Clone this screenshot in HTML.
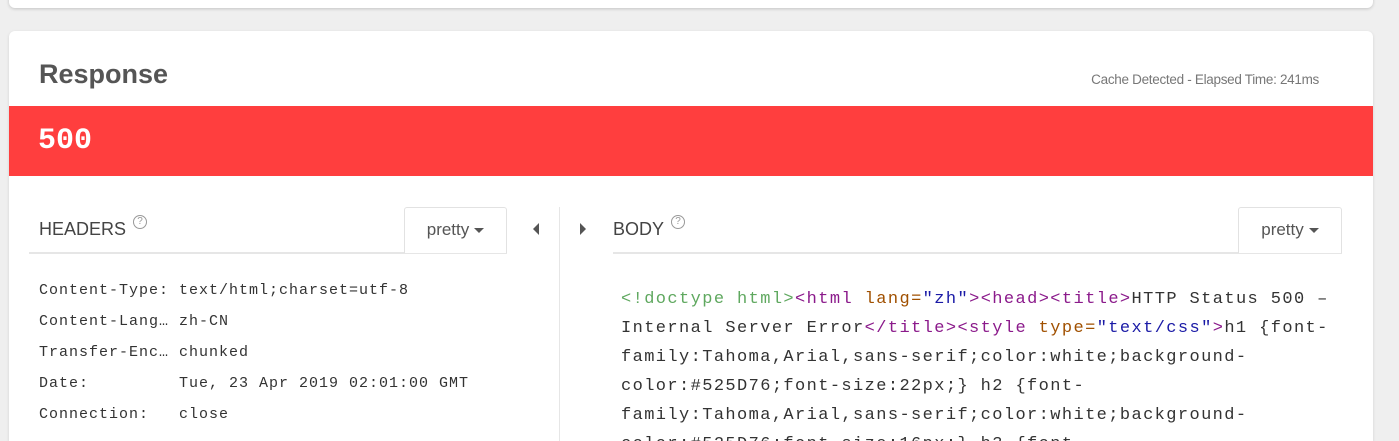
<!DOCTYPE html>
<html style="height:441px;overflow:hidden"><head><style>
body{margin:0;width:1399px;height:441px;background:#efefef;overflow:hidden;font-family:"Liberation Sans",sans-serif;position:relative}
.top{position:absolute;left:9px;top:-10px;width:1364px;height:18px;background:#fff;border-radius:6px;box-shadow:0 1px 3px rgba(0,0,0,.18)}
.card{position:absolute;left:9px;top:31px;width:1364px;height:410px;background:#fff;border-radius:6px 6px 0 0;box-shadow:0 1px 3px rgba(0,0,0,.12);overflow:hidden}
.abs{position:absolute}
.title{left:30px;top:28px;font-size:27px;font-weight:bold;color:#555}
.cache{right:54px;top:41px;font-size:13.5px;color:#777;letter-spacing:-0.3px}
.red{left:0;top:75px;width:1364px;height:70px;background:#ff3e3e}
.code{left:29px;top:93px;font-family:"Liberation Mono",monospace;font-weight:bold;color:#fff;font-size:30px}
.lab{font-size:18px;color:#444}
.q{display:inline-block;width:12px;height:12px;border:1px solid #999;border-radius:50%;font-size:10px;color:#999;text-align:center;line-height:12px;vertical-align:top;margin-left:7px;margin-top:-4px}
.line{height:2px;background:#e6e6e6}
.btn{border:1px solid #e2e2e2;border-bottom:none;border-radius:3px 3px 0 0;background:#fff;font-size:17px;color:#555;text-align:center;line-height:44px}
.car{display:inline-block;border-left:5px solid transparent;border-right:5px solid transparent;border-top:5px solid #555;vertical-align:middle;margin-left:5px}
.hd{font-family:"Liberation Mono",monospace;font-size:15px;color:#333;line-height:31px;white-space:pre;letter-spacing:1px}
.bd{font-family:"Liberation Mono",monospace;font-size:17px;color:#333;line-height:29px;white-space:pre;letter-spacing:1.4px}
.g{color:#5fa85f}.p{color:#8b1a8b}.o{color:#a05000}.b{color:#1a1aa6}
</style></head><body>
<div class="top"></div>
<div class="card">
<div class="abs title">Response</div>
<div class="abs cache">Cache Detected - Elapsed Time: 241ms</div>
<div class="abs red"></div>
<div class="abs code">500</div>
<div class="abs lab" style="left:30px;top:188px">HEADERS<span class="q">?</span></div>
<div class="abs line" style="left:20px;top:221px;width:478px"></div>
<div class="abs btn" style="left:395px;top:176px;width:101px;height:45px">pretty<span class="car"></span></div>
<div class="abs" style="left:524px;top:192px;width:0;height:0;border-top:6px solid transparent;border-bottom:6px solid transparent;border-right:6px solid #555"></div>
<div class="abs" style="left:571px;top:192px;width:0;height:0;border-top:6px solid transparent;border-bottom:6px solid transparent;border-left:6px solid #555"></div>
<div class="abs" style="left:550px;top:176px;width:1px;height:260px;background:#e6e6e6"></div>
<div class="abs lab" style="left:604px;top:188px">BODY<span class="q">?</span></div>
<div class="abs line" style="left:604px;top:221px;width:729px"></div>
<div class="abs btn" style="left:1229px;top:176px;width:102px;height:45px">pretty<span class="car"></span></div>
<div class="abs hd" style="left:30px;top:244px">Content-Type: text/html;charset=utf-8
Content-Lang… zh-CN
Transfer-Enc… chunked
Date:         Tue, 23 Apr 2019 02:01:00 GMT
Connection:   close</div>
<div class="abs bd" style="left:612px;top:254px"><span class="g">&lt;!doctype html&gt;</span><span class="p">&lt;html </span><span class="o">lang=</span><span class="b">"zh"</span><span class="p">&gt;&lt;head&gt;&lt;title&gt;</span>HTTP Status 500 –
Internal Server Error<span class="p">&lt;/title&gt;&lt;style </span><span class="o">type=</span><span class="b">"text/css"</span><span class="p">&gt;</span>h1 {font-
family:Tahoma,Arial,sans-serif;color:white;background-
color:#525D76;font-size:22px;} h2 {font-
family:Tahoma,Arial,sans-serif;color:white;background-
color:#525D76;font-size:16px;} h3 {font-</div>
</div>
</body></html>
